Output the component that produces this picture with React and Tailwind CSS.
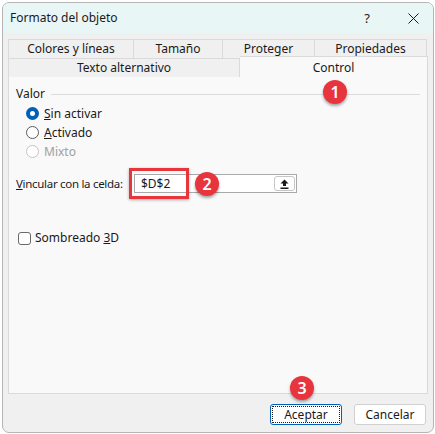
import React from 'react';

const tabsTop = [
  { label: 'Colores y líneas', w: 'w-[126px]' },
  { label: 'Tamaño', w: 'w-[89px]' },
  { label: 'Proteger', w: 'w-[92px]' },
  { label: 'Propiedades', w: 'flex-1' },
];

function Badge({ n, className }) {
  return (
    <div
      className={`absolute flex h-[24px] w-[24px] items-center justify-center rounded-full bg-[#e8353d] text-[16px] font-semibold text-white shadow-[0_2px_3px_rgba(0,0,0,0.35)] ${className}`}
    >
      {n}
    </div>
  );
}

function Radio({ checked, disabled, children }) {
  return (
    <div className="flex h-[19px] items-center gap-[5px]">
      {checked ? (
        <span className="flex h-[13px] w-[13px] items-center justify-center rounded-full bg-[#005fb8]">
          <span className="h-[5px] w-[5px] rounded-full bg-white" />
        </span>
      ) : (
        <span
          className={`h-[13px] w-[13px] rounded-full border bg-white ${
            disabled ? 'border-[#c4c4c4]' : 'border-[#5a5a5a]'
          }`}
        />
      )}
      <span className={disabled ? 'text-[#a0a0a0]' : 'text-[#1a1a1a]'}>{children}</span>
    </div>
  );
}

export default function App() {
  return (
    <div className="h-[434px] w-[435px] bg-white pt-[2px] pl-[2px] pr-[1px] pb-[1px] font-['Noto_Sans',sans-serif] text-[12px] leading-[16px] text-[#1a1a1a]">
      <div className="relative flex h-full flex-col overflow-hidden rounded-[7px] border border-[#b5b5b5] bg-[#f0f0f0]">
        {/* title bar */}
        <div className="flex h-[30px] shrink-0 items-center bg-[#e8f6f6] pl-[7px] pr-[14px]">
          <span className="flex-1 text-[12px]">Formato del objeto</span>
          <span className="mr-[38px] text-[13px]">?</span>
          <svg width="11" height="11" viewBox="0 0 11 11" className="stroke-[#1a1a1a]">
            <path d="M0.5 0.5 L10.5 10.5 M10.5 0.5 L0.5 10.5" strokeWidth="1" />
          </svg>
        </div>

        <div className="flex flex-1 flex-col px-[5px] pt-[6px]">
          {/* tabs row 1 */}
          <div className="flex h-[19px] pr-[1px]">
            {tabsTop.map(t => (
              <div
                key={t.label}
                className={`${t.w} flex items-center justify-center border border-b-0 border-l-0 border-[#dadada] first:border-l`}
              >
                {t.label}
              </div>
            ))}
          </div>
          {/* tabs row 2 */}
          <div className="flex h-[19px]">
            <div className="flex w-[232px] items-center justify-center border border-b-0 border-[#dadada]">
              Texto alternativo
            </div>
            <div className="-mt-[2px] flex flex-1 items-center justify-center border border-b-0 border-l-0 border-[#dadada] bg-[#f9f9f9] pt-[1px]">
              Control
            </div>
          </div>

          {/* panel */}
          <div className="h-[317px] border border-t-0 border-[#dadada] bg-[#f9f9f9] px-[7px] pt-[9px]">
            <div className="flex items-center gap-[6px]">
              <span>Valor</span>
              <span className="h-px flex-1 bg-[#dcdcdc]" />
            </div>
            <div className="mt-[2px] pl-[10px]">
              <Radio checked>
                <span className="underline">S</span>in activar
              </Radio>
              <Radio>
                <span className="underline">A</span>ctivado
              </Radio>
              <Radio disabled>Mixto</Radio>
            </div>

            <div className="mt-[13px] flex h-[19px] items-center">
              <span className="w-[118px] whitespace-nowrap text-[11.5px] tracking-[-0.3px]">
                <span className="underline">V</span>incular con la celda:
              </span>
              <div className="flex h-[19px] w-[163px] items-center border border-[#a9a9a9] bg-white pl-[6px] pr-[1px]">
                <span className="flex-1">$D$2</span>
                <div className="flex h-[15px] w-[21px] items-center justify-center rounded-[3px] border border-[#c6c6c6] bg-white">
                  <svg width="9" height="10" viewBox="0 0 9 10">
                    <path d="M4.5 0.5 L8.5 4.5 L6 4.5 L6 7 L3 7 L3 4.5 L0.5 4.5 Z" fill="#1a1a1a" />
                    <rect x="0.5" y="8.5" width="8" height="1.5" fill="#1a1a1a" />
                  </svg>
                </div>
              </div>
            </div>

            <div className="mt-[37px] flex h-[16px] items-center gap-[4px] pl-[2px]">
              <span className="h-[13px] w-[13px] rounded-[3px] border border-[#6a6a6a] bg-white" />
              <span>
                Sombreado <span className="underline">3</span>D
              </span>
            </div>
          </div>

          {/* footer */}
          <div className="flex flex-1 items-start justify-end gap-[12px] pr-[2px] pt-[10px]">
            <button
              type="button"
              className="h-[21px] w-[72px] rounded-[3px] border border-[#005fb8] bg-white text-[12px] outline-1 -outline-offset-3 outline-dotted outline-[#1a1a1a]"
            >
              Aceptar
            </button>
            <button
              type="button"
              className="h-[21px] w-[72px] rounded-[3px] border border-[#d0d0d0] bg-white text-[12px]"
            >
              Cancelar
            </button>
          </div>
        </div>

        {/* annotations */}
        <div className="pointer-events-none absolute left-[126px] top-[165px] h-[31px] w-[60px] border-[3px] border-[#e8353d] shadow-[0_1px_3px_rgba(0,0,0,0.3)]" />
        <Badge n="1" className="left-[320px] top-[77px]" />
        <Badge n="2" className="left-[192px] top-[169px]" />
        <Badge n="3" className="left-[287px] top-[373px]" />
      </div>
    </div>
  );
}
